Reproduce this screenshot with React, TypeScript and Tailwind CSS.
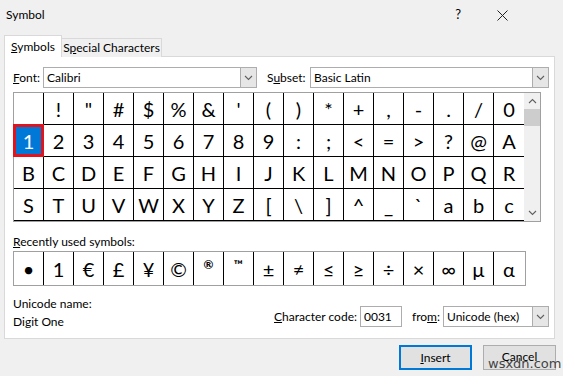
import React from "react";

const ui = { fontFamily: "Lato, 'Noto Sans', sans-serif" };
const glyph = { fontFamily: "Lato, 'Noto Sans', 'DejaVu Sans', sans-serif" };

const rows = [
  [" ", "!", '"', "#", "$", "%", "&", "'", "(", ")", "*", "+", ",", "-", ".", "/", "0"],
  ["1", "2", "3", "4", "5", "6", "7", "8", "9", ":", ";", "<", "=", ">", "?", "@", "A"],
  ["B", "C", "D", "E", "F", "G", "H", "I", "J", "K", "L", "M", "N", "O", "P", "Q", "R"],
  ["S", "T", "U", "V", "W", "X", "Y", "Z", "[", "\\", "]", "^", "_", "`", "a", "b", "c"],
];

const recent = ["•", "1", "€", "£", "¥", "©", "®", "™", "±", "≠", "≤", "≥", "÷", "×", "∞", "µ", "α"];

const Chevron = ({ up = false }: { up?: boolean }) => (
  <svg width="9" height="6" viewBox="0 0 9 6">
    <path
      d={up ? "M1 5 L4.5 1.5 L8 5" : "M1 1 L4.5 4.5 L8 1"}
      fill="none"
      stroke="#606060"
      strokeWidth="1.1"
    />
  </svg>
);

const Select = ({ value, className }: { value: string; className: string }) => (
  <div className={`flex h-[21px] items-stretch border border-[#adadad] bg-white ${className}`}>
    <div className="flex flex-1 items-center pl-[3px] text-[12px] text-black">{value}</div>
    <div className="flex w-[16px] items-center justify-center border-l border-[#adadad] bg-[#e6e6e6]">
      <Chevron />
    </div>
  </div>
);

export default function App() {
  return (
    <div className="relative flex h-[376px] w-[563px] flex-col overflow-hidden bg-[#f0f0f0] text-[12px] text-black" style={ui}>
      {/* Title bar */}
      <div className="flex h-[30px] items-center pl-[6px]">
        <span className="text-[12px]">Symbol</span>
        <span className="ml-auto mr-[36px] text-[13px]">?</span>
        <svg className="mr-[55px]" width="11" height="11" viewBox="0 0 11 11">
          <path d="M0.5 0.5 L10.5 10.5 M10.5 0.5 L0.5 10.5" stroke="#222" strokeWidth="1" />
        </svg>
      </div>

      {/* Tabs */}
      <div className="relative z-10 mt-[5px] flex h-[22px] items-end pl-[4px]">
        <div className="flex h-[22px] w-[58px] items-center justify-center border border-b-0 border-[#d9d9d9] bg-white">
          <span><u>S</u>ymbols</span>
        </div>
        <div className="flex h-[19px] w-[100px] items-center justify-center border border-b-0 border-l-0 border-[#d9d9d9] bg-[#f0f0f0]">
          <span>S<u>p</u>ecial Characters</span>
        </div>
      </div>

      {/* Panel */}
      <div className="-mt-[1px] ml-[4px] flex h-[283px] w-[551px] flex-col border border-[#d9d9d9] bg-white pl-[8px]">
        <div className="mt-[10px] flex items-center">
          <span className="w-[30px]"><u>F</u>ont:</span>
          <Select value="Calibri" className="w-[214px]" />
          <span className="ml-[10px] w-[43px]">S<u>u</u>bset:</span>
          <Select value="Basic Latin" className="w-[239px]" />
        </div>

        {/* Character grid */}
        <div className="mt-[4px] flex w-[528px] border border-[#a0a0a0]">
          <div className="flex w-[510px] flex-col">
            {rows.map((row, ri) => (
              <div key={ri} className="flex h-[32px] border-b border-black">
                {row.map((ch, ci) => {
                  const sel = ri === 1 && ci === 0;
                  return sel ? (
                    <div
                      key={ci}
                      className="-ml-[1px] -mt-[1px] flex h-[33px] w-[31px] items-center justify-center border-[3px] border-[#e0141e] bg-[#0078d7] text-[20px] text-white"
                      style={glyph}
                    >
                      {ch}
                    </div>
                  ) : (
                    <div
                      key={ci}
                      className={`flex h-full w-[30px] items-center justify-center text-[20px] ${
                        ci < 16 ? "border-r border-black" : ""
                      }`}
                      style={glyph}
                    >
                      {ch}
                    </div>
                  );
                })}
              </div>
            ))}
          </div>
          <div className="flex w-[16px] flex-col items-center bg-[#f0f0f0]">
            <div className="flex h-[16px] items-center justify-center">
              <Chevron up />
            </div>
            <div className="h-[17px] w-[16px] bg-[#cdcdcd]" />
            <div className="mt-auto flex h-[16px] items-center justify-center">
              <Chevron />
            </div>
          </div>
        </div>

        <div className="mt-[12px] h-[16px] leading-[16px]">
          <u>R</u>ecently used symbols:
        </div>
        <div className="mt-[1px] flex h-[35px] w-[513px] border border-[#a0a0a0]">
          {recent.map((ch, i) => (
            <div
              key={i}
              className={`flex h-full w-[30px] items-center justify-center ${i < 16 ? "border-r border-black" : ""} ${
                ch === "®" || ch === "™" ? "pb-[8px] text-[12px] font-bold" : "text-[20px]"
              }`}
              style={glyph}
            >
              {ch}
            </div>
          ))}
        </div>

        <div className="mt-[10px] flex">
          <div className="flex flex-col leading-[16px]">
            <span>Unicode name:</span>
            <span className="mt-[2px]">Digit One</span>
          </div>
          <div className="ml-auto mr-[5px] mt-[7px] flex items-center">
            <span className="mr-[3px]"><u>C</u>haracter code:</span>
            <div className="flex h-[21px] w-[42px] items-center border border-[#adadad] pl-[3px]">0031</div>
            <span className="ml-[10px] mr-[3px]">fro<u>m</u>:</span>
            <Select value="Unicode (hex)" className="w-[106px]" />
          </div>
        </div>
      </div>

      {/* Buttons */}
      <div className="mt-[6px] flex justify-end pr-[7px]">
        <div className="flex h-[25px] w-[73px] items-center justify-center border-2 border-[#0078d7] bg-[#e1e1e1]">
          <span><u>I</u>nsert</span>
        </div>
        <div className="relative ml-[11px] flex h-[25px] w-[73px] items-start justify-center border border-[#adadad] bg-[#e1e1e1] pt-[2px]">
          <span>Cancel</span>
          <span className="absolute left-[4px] top-[11px] text-[13px] leading-[13px] text-[#444]" style={{ fontFamily: "'DejaVu Sans', sans-serif" }}>
            wsxdn.com
          </span>
        </div>
      </div>
    </div>
  );
}
